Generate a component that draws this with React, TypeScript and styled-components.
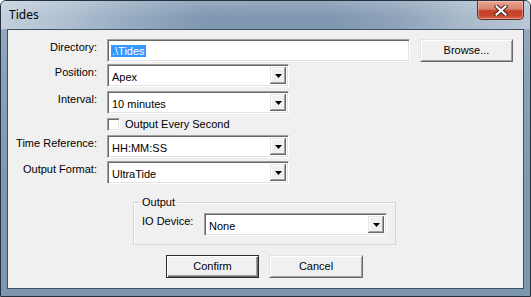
import React from "react";
import styled, { createGlobalStyle } from "styled-components";

const Global = createGlobalStyle`
  html, body { margin: 0; padding: 0; background: #ffffff; }
  body { font-family: "Liberation Sans", Arial, sans-serif; }
  * { box-sizing: border-box; }
`;

const Window = styled.div`
  width: 531px;
  height: 297px;
  border: 1px solid #26323f;
  border-radius: 6px 6px 0 0;
  overflow: hidden;
  display: flex;
  flex-direction: column;
  background: linear-gradient(180deg, #9fb2c6 0px, #8aa2ba 60px, #7d97b1 200px);
`;

const TitleBar = styled.div`
  height: 28px;
  flex-shrink: 0;
  display: flex;
  align-items: flex-start;
  justify-content: space-between;
  padding: 0 6px 0 7px;
  background:
    linear-gradient(180deg, rgba(255,255,255,0.18) 0%, rgba(255,255,255,0) 60%),
    linear-gradient(90deg, #c3d0dd 0%, #b3c3d3 10%, #94aac0 25%, #8098b2 38%, #7f97b1 62%, #8ea3ba 75%, #a9bacb 88%, #b8c6d5 100%);
`;

const Title = styled.div`
  font-family: "Noto Sans", "Open Sans", sans-serif;
  font-size: 12px;
  line-height: 28px;
  color: #000;
  padding-left: 1px;
`;

const CloseButton = styled.div`
  width: 47px;
  height: 19px;
  border: 1px solid #5b2e27;
  border-top: none;
  border-radius: 0 0 5px 5px;
  background: linear-gradient(180deg, #e8a594 0%, #d8826e 45%, #c23f26 55%, #c8472e 80%, #d9664a 100%);
  box-shadow: inset 0 0 0 1px rgba(255, 220, 210, 0.45);
  display: flex;
  align-items: center;
  justify-content: center;
`;

const Body = styled.div`
  flex: 1;
  display: flex;
  padding: 0 6px 7px 6px;
`;

const Client = styled.div`
  flex: 1;
  background: #f0f0f0;
  border: 1px solid #3e5064;
  display: flex;
  flex-direction: column;
  padding-top: 9px;
  font-size: 11px;
  color: #000;
`;

const Row = styled.div<{ $mt: number }>`
  display: flex;
  align-items: flex-start;
  margin-top: ${(p) => p.$mt}px;
  height: 23px;
`;

const Label = styled.div<{ $w?: number }>`
  width: ${(p) => p.$w ?? 89}px;
  flex-shrink: 0;
  text-align: ${(p) => (p.$w ? "left" : "right")};
  margin-right: ${(p) => (p.$w ? 0 : 10)}px;
  padding-top: 2px;
  line-height: 13px;
  white-space: nowrap;
`;

const sunken = `
  background: #ffffff;
  border: 1px solid;
  border-color: #a0a0a0 #ffffff #ffffff #a0a0a0;
  box-shadow: inset 1px 1px 0 #696969, inset -1px -1px 0 #e3e3e3;
`;

const TextBox = styled.div`
  ${sunken}
  width: 303px;
  height: 23px;
  padding: 5px 0 0 3px;
  line-height: 13px;
`;

const Selected = styled.span`
  background: #3399ff;
  color: #ffffff;
  padding: 0 1px;
`;

const Select = styled.div<{ $w: number }>`
  ${sunken}
  width: ${(p) => p.$w}px;
  height: 23px;
  display: flex;
  align-items: stretch;
  padding: 2px;
`;

const SelectValue = styled.div`
  flex: 1;
  line-height: 13px;
  padding: 4px 0 0 2px;
`;

const ArrowButton = styled.div`
  width: 16px;
  background: #f0f0f0;
  box-shadow: inset -1px -1px 0 #696969, inset 1px 1px 0 #e3e3e3, inset -2px -2px 0 #a0a0a0, inset 2px 2px 0 #ffffff;
  display: flex;
  align-items: center;
  justify-content: center;
`;

const Button = styled.div<{ $w: number; $default?: boolean }>`
  width: ${(p) => p.$w}px;
  height: 23px;
  background: #f0f0f0;
  border: 1px solid ${(p) => (p.$default ? "#2b2b2b" : "#e3e3e3")};
  ${(p) =>
    p.$default
      ? "box-shadow: inset 1px 1px 0 #ffffff, inset -1px -1px 0 #696969, inset -2px -2px 0 #a0a0a0;"
      : "border-color: #e3e3e3 #696969 #696969 #e3e3e3; box-shadow: inset 1px 1px 0 #ffffff, inset -1px -1px 0 #a0a0a0;"}
  display: flex;
  align-items: center;
  justify-content: center;
  line-height: 13px;
`;

const CheckRow = styled.div<{ $mt: number }>`
  display: flex;
  align-items: center;
  margin-top: ${(p) => p.$mt}px;
  margin-left: 99px;
  height: 13px;
  gap: 5px;
  line-height: 13px;
`;

const CheckBox = styled.div`
  ${sunken}
  width: 13px;
  height: 13px;
`;

const Group = styled.fieldset`
  margin: 12px 0 0 125px;
  width: 263px;
  padding: 0 8px 8px 8px;
  border: 1px solid #d5d5d5;
  box-shadow: inset 1px 1px 0 #ffffff;
  min-width: 0;
`;

const Legend = styled.legend`
  margin-left: -2px;
  padding: 0 2px;
  line-height: 13px;
  font-size: 11px;
`;

const GroupRow = styled.div`
  display: flex;
  align-items: flex-start;
  margin-top: 4px;
  height: 23px;
`;

const ButtonRow = styled.div`
  display: flex;
  gap: 10px;
  margin-top: 10px;
  padding-left: 158px;
`;

const Arrow = () => (
  <svg width="7" height="4" viewBox="0 0 7 4">
    <polygon points="0,0 7,0 3.5,4" fill="#000" />
  </svg>
);

const Combo = ({ value, w }: { value: string; w: number }) => (
  <Select $w={w}>
    <SelectValue>{value}</SelectValue>
    <ArrowButton>
      <Arrow />
    </ArrowButton>
  </Select>
);

export default function App() {
  return (
    <>
      <Global />
      <Window>
        <TitleBar>
          <Title>Tides</Title>
          <CloseButton>
            <svg width="14" height="11" viewBox="0 0 14 11">
              <path d="M2.5 1.5 L11.5 9.5 M11.5 1.5 L2.5 9.5" stroke="#4a2420" strokeWidth="4.2" strokeLinecap="square" />
              <path d="M2.5 1.5 L11.5 9.5 M11.5 1.5 L2.5 9.5" stroke="#ffffff" strokeWidth="2.2" strokeLinecap="square" />
            </svg>
          </CloseButton>
        </TitleBar>
        <Body>
          <Client>
            <Row $mt={0}>
              <Label>Directory:</Label>
              <TextBox>
                <Selected>.\Tides</Selected>
              </TextBox>
              <Button $w={93} style={{ marginLeft: 10 }}>Browse...</Button>
            </Row>
            <Row $mt={2}>
              <Label>Position:</Label>
              <Combo value="Apex" w={182} />
            </Row>
            <Row $mt={4}>
              <Label>Interval:</Label>
              <Combo value="10 minutes" w={182} />
            </Row>
            <CheckRow $mt={4}>
              <CheckBox />
              <span>Output Every Second</span>
            </CheckRow>
            <Row $mt={4}>
              <Label>Time Reference:</Label>
              <Combo value="HH:MM:SS" w={182} />
            </Row>
            <Row $mt={3}>
              <Label>Output Format:</Label>
              <Combo value="UltraTide" w={182} />
            </Row>
            <Group>
              <Legend>Output</Legend>
              <GroupRow>
                <Label $w={62}>IO Device:</Label>
                <Combo value="None" w={183} />
              </GroupRow>
            </Group>
            <ButtonRow>
              <Button $w={93} $default>Confirm</Button>
              <Button $w={94}>Cancel</Button>
            </ButtonRow>
          </Client>
        </Body>
      </Window>
    </>
  );
}
